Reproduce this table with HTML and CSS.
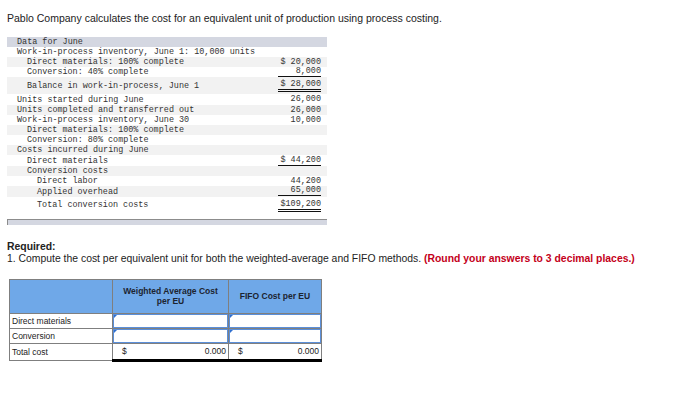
FILE: index.html
```html
<!DOCTYPE html>
<html>
<head>
<meta charset="utf-8">
<link rel="stylesheet" href="styles.css">
</head>
<body>
<p class="intro">Pablo Company calculates the cost for an equivalent unit of production using process costing.</p>

<div class="data-wrap">
<table class="data">
  <tr class="head"><td class="l0">Data for June</td><td></td></tr>
  <tr><td class="l0">Work-in-process inventory, June 1: 10,000 units</td><td></td></tr>
  <tr class="alt"><td class="l1">Direct materials: 100% complete</td><td class="v"><span>$ 20,000</span></td></tr>
  <tr><td class="l1">Conversion: 40% complete</td><td class="v"><span class="u1">8,000</span></td></tr>
  <tr class="alt tall"><td class="l1">Balance in work-in-process, June 1</td><td class="v"><span class="u2">$ 28,000</span></td></tr>
  <tr><td class="l0">Units started during June</td><td class="v"><span>26,000</span></td></tr>
  <tr class="alt"><td class="l0">Units completed and transferred out</td><td class="v"><span>26,000</span></td></tr>
  <tr><td class="l0">Work-in-process inventory, June 30</td><td class="v"><span>10,000</span></td></tr>
  <tr class="alt"><td class="l1">Direct materials: 100% complete</td><td></td></tr>
  <tr><td class="l1">Conversion: 80% complete</td><td></td></tr>
  <tr class="alt"><td class="l0">Costs incurred during June</td><td></td></tr>
  <tr class="mid"><td class="l1">Direct materials</td><td class="v"><span class="u1">$ 44,200</span></td></tr>
  <tr class="alt"><td class="l1">Conversion costs</td><td></td></tr>
  <tr><td class="l2">Direct labor</td><td class="v"><span>44,200</span></td></tr>
  <tr class="alt"><td class="l2">Applied overhead</td><td class="v"><span class="u1">65,000</span></td></tr>
  <tr class="tall"><td class="l2">Total conversion costs</td><td class="v"><span class="u2">$109,200</span></td></tr>
</table>
<div class="data-foot"></div>
</div>

<div class="required">
  <div class="req-title">Required:</div>
  <div class="req-text">1. Compute the cost per equivalent unit for both the weighted-average and FIFO methods. <span class="red">(Round your answers to 3 decimal places.)</span></div>
</div>

<table class="answer">
  <tr class="ahead">
    <th class="c1"></th>
    <th class="c2">Weighted Average Cost<br>per EU</th>
    <th class="c3">FIFO Cost per EU</th>
  </tr>
  <tr>
    <td class="lbl">Direct materials</td>
    <td class="inp"><div class="box"></div></td>
    <td class="inp"><div class="box"></div></td>
  </tr>
  <tr>
    <td class="lbl">Conversion</td>
    <td class="inp"><div class="box"></div></td>
    <td class="inp"><div class="box"></div></td>
  </tr>
  <tr class="total">
    <td class="lbl">Total cost</td>
    <td class="tot"><div class="tot-in"><span>$</span><span>0.000</span></div></td>
    <td class="tot"><div class="tot-in"><span>$</span><span>0.000</span></div></td>
  </tr>
</table>
</body>
</html>
```

FILE: styles.css
```css
body {
  margin: 0;
  padding: 12px 7px 0 7px;
  font-family: "Liberation Sans", Arial, sans-serif;
  color: #222;
  background: #fff;
}

.intro {
  margin: 0;
  font-size: 10.5px;
  line-height: 13px;
}

.data-wrap {
  margin-top: 12px;
  width: 320px;
}

.data {
  border-collapse: collapse;
  width: 320px;
  font-family: "Liberation Mono", "Courier New", monospace;
  font-size: 8.45px;
  color: #333;
}

.data td {
  padding: 0;
  height: 10px;
  line-height: 10px;
  white-space: nowrap;
}

.data tr.head td { background: #d4d7e1; }
.data tr.alt td { background: #f2f2f2; }
.data tr.tall td { height: 17px; }
.data tr.mid td { height: 11px; }

.data td.l0 { padding-left: 10px; }
.data td.l1 { padding-left: 20px; }
.data td.l2 { padding-left: 30px; }

.data td.v {
  text-align: right;
  padding-right: 6px;
  width: 50px;
}

.data td.v span {
  display: inline-block;
  width: 43px;
  text-align: right;
  vertical-align: middle;
}

.data td.v span.u1 { border-bottom: 1px solid #111; line-height: 9px; }
.data td.v span.u2 { border-bottom: 3px double #111; line-height: 10px; }

.data-foot {
  margin-top: 5px;
  height: 5px;
  background: #d4d7e1;
  border-top: 1px solid #8c8c8c;
  border-left: 1px solid #8c8c8c;
}

.required {
  margin-top: 16px;
  font-size: 10.4px;
  line-height: 12px;
}

.req-title { font-weight: bold; }

.red {
  color: #c4001a;
  font-weight: bold;
}

.answer {
  margin-top: 14px;
  margin-left: 2px;
  border-collapse: collapse;
  font-size: 8.5px;
}

.answer th, .answer td {
  border: 1px solid #7f7f7f;
  padding: 0;
}

.ahead th {
  background: #6fa8e8;
  height: 33px;
  font-weight: bold;
  color: #1c2430;
  line-height: 10px;
}

.answer .c1 { width: 102px; }
.answer .c2 { width: 115px; }
.answer .c3 { width: 92px; }

.answer td { height: 14px; }

.answer td.lbl {
  padding-left: 2px;
  color: #222;
}

.answer td.inp {
  padding: 0;
  vertical-align: middle;
}

.box {
  position: relative;
  height: 12px;
  margin: 0;
  border: 1px solid #5b8fd9;
  background: #fff;
}

.box::before {
  content: "";
  position: absolute;
  left: 0;
  top: 0;
  border-top: 3px solid #2f6fd0;
  border-right: 3px solid transparent;
}

.total td { height: 15px; }

.answer td.tot {
  border-bottom: 3px solid #000;
}

.tot-in {
  display: flex;
  justify-content: space-between;
  padding: 0 2px 0 9px;
}
```
